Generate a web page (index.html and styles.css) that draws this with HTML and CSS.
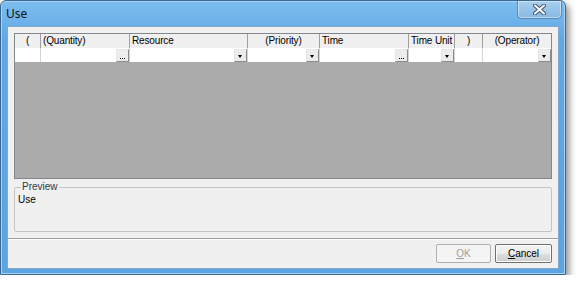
FILE: index.html
```html
<!DOCTYPE html>
<html>
<head>
    <title>Use</title>
    <link rel="stylesheet" href="styles.css">
</head>
<body>
    <div class="window">
        <div class="titlebar">
            <span class="title">Use</span>
            <button type="button" class="close" title="Close">
                <svg width="13" height="11" viewBox="0 0 13 11">
                    <path d="M2 1.5 L11 9.5 M11 1.5 L2 9.5" stroke="#3b5676" stroke-width="4" stroke-linecap="round"/>
                    <path d="M2 1.5 L11 9.5 M11 1.5 L2 9.5" stroke="#fff" stroke-width="2" stroke-linecap="round"/>
                </svg>
            </button>
        </div>

        <div class="client">
            <div class="grid">
                <div class="hd center">(</div>
                <div class="hd">(Quantity)</div>
                <div class="hd">Resource</div>
                <div class="hd center">(Priority)</div>
                <div class="hd">Time</div>
                <div class="hd">Time Unit</div>
                <div class="hd center">)</div>
                <div class="hd center last">(Operator)</div>

                <div class="cell"></div>
                <div class="cell"><span class="btn dots"><i></i><i></i><i></i></span></div>
                <div class="cell"><span class="btn drop"></span></div>
                <div class="cell"><span class="btn drop"></span></div>
                <div class="cell"><span class="btn dots"><i></i><i></i><i></i></span></div>
                <div class="cell"><span class="btn drop"></span></div>
                <div class="cell"></div>
                <div class="cell last"><span class="btn drop"></span></div>

                <div class="empty"></div>
            </div>

            <fieldset class="preview">
                <legend>Preview</legend>
                <div class="preview-text">Use</div>
            </fieldset>

            <div class="separator"></div>

            <div class="buttons">
                <button type="button" class="push" disabled><u>O</u>K</button>
                <button type="button" class="push"><u>C</u>ancel</button>
            </div>
        </div>
    </div>
</body>
</html>
```

FILE: styles.css
```css
body {
    margin: 0;
    background-color: #fff;
    font-family: "Liberation Sans", Arial, sans-serif;
    font-size: 10px;
    color: #000;
}

/* Fenetre */
.window {
    box-sizing: border-box;
    width: 566px;
    height: 275px;
    border: 1px solid #3a6793;
    border-radius: 6px 6px 0 0;
    padding: 0 6px 5px 6px;
    background: linear-gradient(to bottom, #7dbdef, #5ea8e4 40px, #5aa4e1);
    box-shadow: inset 0 0 0 1px #a9d2f3, 3px 4px 7px rgba(0, 0, 0, 0.45);
    display: flex;
    flex-direction: column;
}

.titlebar {
    height: 25px;
    flex: none;
    display: flex;
    align-items: flex-start;
}

.title {
    font-family: "Noto Sans", "Liberation Sans", sans-serif;
    font-size: 12px;
    color: #111;
    margin-top: 4px;
    margin-left: -1px;
}

.close {
    margin-left: auto;
    margin-right: -3px;
    width: 45px;
    height: 18px;
    border: 1px solid #5b88b4;
    border-top: none;
    border-radius: 0 0 5px 5px;
    background: linear-gradient(to bottom, #a9cfee, #86b9e2);
    box-shadow: inset 0 0 0 1px rgba(255, 255, 255, 0.45);
    padding: 0;
    display: flex;
    justify-content: center;
    align-items: center;
}

/* Zone cliente */
.client {
    flex: 1;
    background-color: #f0f0f0;
    border: 1px solid #87a8c8;
    padding: 6px 6px 5px 6px;
    display: flex;
    flex-direction: column;
}

/* Grille */
.grid {
    height: 144px;
    flex: none;
    border: 1px solid #828790;
    background-color: #ababab;
    display: grid;
    grid-template-columns: 26px 89px 118px 72px 89px 46px 28px 1fr;
    grid-template-rows: 14px 14px 1fr;
}

.hd {
    background-color: #f0f0f0;
    border-right: 1px solid #a0a0a0;
    padding: 0 2px;
    line-height: 13px;
    letter-spacing: -0.15px;
    white-space: nowrap;
    overflow: hidden;
}

.center {
    text-align: center;
}

.cell {
    background-color: #fff;
    border-right: 1px solid #d4d4d4;
    display: flex;
    justify-content: flex-end;
    align-items: center;
}

.last {
    border-right: none;
}

.btn {
    width: 13px;
    height: 13px;
    border: 1px solid #8c8c8c;
    border-top-color: #e6e6e6;
    border-left-color: #e6e6e6;
    background-color: #ececec;
    box-sizing: border-box;
    position: relative;
}

.dots {
    display: flex;
    justify-content: center;
    align-items: flex-end;
    gap: 1px;
    padding-bottom: 2px;
}

.dots i {
    width: 1px;
    height: 1px;
    background-color: #000;
}

.drop::after {
    content: "";
    position: absolute;
    left: 3px;
    top: 5px;
    border-left: 2.5px solid transparent;
    border-right: 2.5px solid transparent;
    border-top: 3px solid #000;
}

.empty {
    grid-column: 1 / -1;
}

/* Apercu */
.preview {
    flex: none;
    margin: 2px 0 0 0;
    padding: 0 3px;
    height: 51px;
    box-sizing: border-box;
    border: 1px solid #c5c5c5;
    border-radius: 2px;
}

.preview legend {
    padding: 0 1px;
    margin-left: 3px;
    color: #2a3a4a;
    line-height: 12px;
}

.preview-text {
    margin-top: 1px;
}

.separator {
    flex: none;
    margin: 6px -6px 0 -6px;
    border-top: 1px solid #a0a0a0;
    border-bottom: 1px solid #fff;
}

.buttons {
    margin-top: 4px;
    display: flex;
    justify-content: flex-end;
    gap: 4px;
}

.push {
    font-family: "Liberation Sans", Arial, sans-serif;
    font-size: 10px;
    height: 19px;
    width: 55px;
    padding: 0;
    border: 1px solid #707070;
    border-radius: 2px;
    background: linear-gradient(to bottom, #f4f4f4, #ebebeb 50%, #dddddd 51%, #cfcfcf);
    box-shadow: inset 0 0 0 1px #fcfcfc;
    color: #000;
}

.push + .push {
    width: 57px;
}

.push:disabled {
    border-color: #adb2b5;
    background: #f4f4f4;
    color: #a0a0a0;
    box-shadow: none;
}
```
